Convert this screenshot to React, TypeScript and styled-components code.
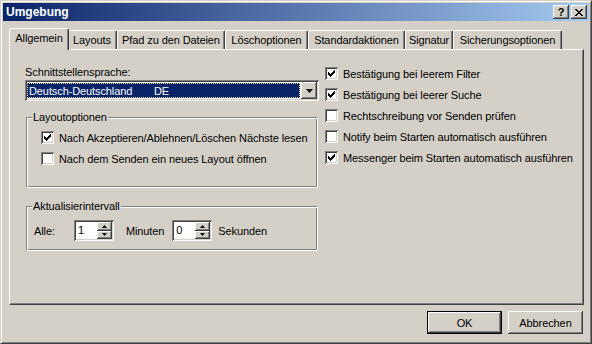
import React from 'react';
import styled, { createGlobalStyle, css } from 'styled-components';

const face = '#d4d0c8';
const shadow = '#808080';
const dark = '#404040';
const navy = '#0a246a';

const GlobalStyle = createGlobalStyle`
  html, body { margin: 0; padding: 0; background: ${face}; }
  body { font: 11px "Liberation Sans", Arial, sans-serif; color: #000; letter-spacing: -0.1px; }
  * { box-sizing: border-box; }
`;

const raised = css`
  background: ${face};
  box-shadow: inset -1px -1px ${dark}, inset 1px 1px #fff, inset -2px -2px ${shadow};
`;

const sunken = css`
  box-shadow: inset 1px 1px ${shadow}, inset -1px -1px #fff, inset 2px 2px ${dark}, inset -2px -2px ${face};
`;

const Window = styled.div`
  width: 592px;
  height: 344px;
  background: ${face};
  border: 1px solid;
  border-color: ${face} ${dark} ${dark} ${face};
  box-shadow: inset 1px 1px #fff, inset -1px -1px ${shadow};
  padding: 2px;
  display: flex;
  flex-direction: column;
`;

const TitleBar = styled.div`
  height: 18px;
  flex: none;
  display: flex;
  align-items: center;
  padding: 0 2px 0 3px;
  background: linear-gradient(to right, ${navy}, #a6caf0);
`;

const Title = styled.span`
  flex: 1;
  color: #fff;
  font-weight: bold;
  font-size: 12px;
  letter-spacing: 0;
`;

const CaptionButton = styled.div`
  ${raised};
  width: 16px;
  height: 14px;
  margin-left: 2px;
  display: flex;
  align-items: center;
  justify-content: center;
  font-weight: bold;
  font-size: 11px;
  line-height: 1;
`;

const Body = styled.div`
  flex: 1;
  display: flex;
  flex-direction: column;
  padding: 7px 5px 0 6px;
`;

const TabStrip = styled.div`
  height: 21px;
  display: flex;
  align-items: flex-end;
  padding-left: 2px;
`;

const Tab = styled.div<{ $w: number; $active?: boolean }>`
  position: relative;
  z-index: ${p => (p.$active ? 2 : 1)};
  width: ${p => p.$w + (p.$active ? 4 : 0)}px;
  height: ${p => (p.$active ? 22 : 19)}px;
  margin: 0 ${p => (p.$active ? -2 : 0)}px ${p => (p.$active ? -1 : 0)}px;
  padding-bottom: ${p => (p.$active ? 3 : 1)}px;
  background: ${face};
  border-top: 1px solid #fff;
  border-left: 1px solid #fff;
  border-right: 1px solid ${dark};
  border-radius: 2px 2px 0 0;
  box-shadow: inset -1px 0 ${shadow};
  display: flex;
  align-items: center;
  justify-content: center;
  white-space: nowrap;
`;

const Panel = styled.div`
  height: 256px;
  border-top: 1px solid #fff;
  border-left: 1px solid #fff;
  border-right: 1px solid ${dark};
  border-bottom: 1px solid ${dark};
  box-shadow: inset -1px -1px ${shadow};
  padding: 16px 0 0 15px;
  display: flex;
  gap: 6px;
`;

const LeftColumn = styled.div`
  width: 294px;
  display: flex;
  flex-direction: column;
`;

const RightColumn = styled.div`
  margin-top: -3px;
  display: flex;
  flex-direction: column;
`;

const FieldLabel = styled.div`
  height: 13px;
  line-height: 13px;
  margin-bottom: 1px;
`;

const Combo = styled.div`
  ${sunken};
  width: 294px;
  height: 21px;
  background: #fff;
  padding: 2px;
  display: flex;
`;

const ComboField = styled.div`
  flex: 1;
  margin: 1px 1px 1px 0;
  background: ${navy};
  border: 1px dotted #e8d890;
  color: #fff;
  display: flex;
  align-items: center;
  padding-left: 1px;
  white-space: nowrap;
`;

const ComboName = styled.span`
  width: 125px;
`;

const DropButton = styled.div`
  ${raised};
  width: 16px;
  height: 17px;
  display: flex;
  align-items: center;
  justify-content: center;
`;

const Group = styled.fieldset<{ $pad: number; $top: number; $bottom: number; $gap: number }>`
  margin: ${p => p.$gap}px 1px 0;
  min-width: 0;
  width: 292px;
  border-top: 1px solid ${shadow};
  border-left: 1px solid ${shadow};
  border-bottom: 1px solid #fff;
  border-right: 1px solid #fff;
  box-shadow: inset 1px 1px #fff, inset -1px -1px ${shadow};
  padding: ${p => p.$top}px 0 ${p => p.$bottom}px ${p => p.$pad}px;
`;

const Legend = styled.legend<{ $shift: number }>`
  padding: 0 1px;
  margin-left: ${p => p.$shift}px;
  line-height: 13px;
  background: ${face};
`;

const CheckRow = styled.div`
  height: 21px;
  display: flex;
  align-items: center;
  gap: 5px;
  white-space: nowrap;
`;

const Box = styled.div`
  ${sunken};
  width: 13px;
  height: 13px;
  flex: none;
  background: #fff;
  display: flex;
  align-items: center;
  justify-content: center;
`;

const SpinRow = styled.div`
  height: 21px;
  display: flex;
  align-items: center;
`;

const SpinText = styled.span<{ $left: number }>`
  margin-left: ${p => p.$left}px;
`;

const Spin = styled.div<{ $left: number }>`
  ${sunken};
  margin-left: ${p => p.$left}px;
  width: 40px;
  height: 21px;
  background: #fff;
  padding: 2px;
  display: flex;
`;

const SpinValue = styled.span`
  flex: 1;
  padding-left: 2px;
  line-height: 17px;
`;

const SpinButtons = styled.div`
  width: 15px;
  display: flex;
  flex-direction: column;
`;

const SpinButton = styled.div`
  ${raised};
  flex: 1;
  display: flex;
  align-items: center;
  justify-content: center;
`;

const ButtonRow = styled.div`
  display: flex;
  justify-content: flex-end;
  gap: 6px;
  margin-top: 6px;
  padding-right: 1px;
`;

const Button = styled.div<{ $default?: boolean }>`
  ${raised};
  width: 75px;
  height: 23px;
  display: flex;
  align-items: center;
  justify-content: center;
  ${p =>
    p.$default &&
    css`
      border: 1px solid #000;
    `}
`;

const Check = () => (
  <svg width="7" height="7" viewBox="0 0 7 7" shapeRendering="crispEdges">
    <path d="M0 2h1v1h1v1h1V3h1V2h1V1h1V0h1v3h-1v1h-1v1h-1v1h-1v1H2V6H1V5H0z" fill="#000" />
  </svg>
);

const Arrow = ({ up, size = 7 }: { up?: boolean; size?: number }) => {
  const h = Math.ceil(size / 2);
  const pts = up ? `0,${h} ${size},${h} ${size / 2},0` : `0,0 ${size},0 ${size / 2},${h}`;
  return (
    <svg width={size} height={h} viewBox={`0 0 ${size} ${h}`}>
      <polygon points={pts} fill="#000" />
    </svg>
  );
};

const CloseGlyph = () => (
  <svg width="8" height="7" viewBox="0 0 8 7" shapeRendering="crispEdges">
    <path
      d="M0 0h2v1h1v1h2V1h1V0h2v1H7v1H6v1H5v1h1v1h1v1h1v1H6V6H5V5H3v1H2v1H0V6h1V5h1V4h1V3H2V2H1V1H0z"
      fill="#000"
    />
  </svg>
);

const CheckItem = ({ label, checked }: { label: string; checked?: boolean }) => (
  <CheckRow>
    <Box>{checked && <Check />}</Box>
    <span>{label}</span>
  </CheckRow>
);

const SpinBox = ({ value, left }: { value: string; left: number }) => (
  <Spin $left={left}>
    <SpinValue>{value}</SpinValue>
    <SpinButtons>
      <SpinButton>
        <Arrow up size={5} />
      </SpinButton>
      <SpinButton>
        <Arrow size={5} />
      </SpinButton>
    </SpinButtons>
  </Spin>
);

const tabs = [
  { label: 'Allgemein', w: 56 },
  { label: 'Layouts', w: 50 },
  { label: 'Pfad zu den Dateien', w: 108 },
  { label: 'Löschoptionen', w: 83 },
  { label: 'Standardaktionen', w: 97 },
  { label: 'Signatur', w: 48 },
  { label: 'Sicherungsoptionen', w: 109 },
];

const options = [
  { label: 'Bestätigung bei leerem Filter', checked: true },
  { label: 'Bestätigung bei leerer Suche', checked: true },
  { label: 'Rechtschreibung vor Senden prüfen', checked: false },
  { label: 'Notify beim Starten automatisch ausführen', checked: false },
  { label: 'Messenger beim Starten automatisch ausführen', checked: true },
];

export default function App() {
  return (
    <>
      <GlobalStyle />
      <Window>
        <TitleBar>
          <Title>Umgebung</Title>
          <CaptionButton>?</CaptionButton>
          <CaptionButton>
            <CloseGlyph />
          </CaptionButton>
        </TitleBar>
        <Body>
          <TabStrip>
            {tabs.map((t, i) => (
              <Tab key={t.label} $w={t.w} $active={i === 0}>
                {t.label}
              </Tab>
            ))}
          </TabStrip>
          <Panel>
            <LeftColumn>
              <FieldLabel>Schnittstellensprache:</FieldLabel>
              <Combo>
                <ComboField>
                  <ComboName>Deutsch-Deutschland</ComboName>
                  <span>DE</span>
                </ComboField>
                <DropButton>
                  <Arrow />
                </DropButton>
              </Combo>
              <Group $pad={14} $top={3} $bottom={18} $gap={10}>
                <Legend $shift={-9}>Layoutoptionen</Legend>
                <CheckItem label="Nach Akzeptieren/Ablehnen/Löschen Nächste lesen" checked />
                <CheckItem label="Nach dem Senden ein neues Layout öffnen" />
              </Group>
              <Group $pad={7} $top={7} $bottom={9} $gap={12}>
                <Legend $shift={-2}>Aktualisierintervall</Legend>
                <SpinRow>
                  <span>Alle:</span>
                  <SpinBox value="1" left={19} />
                  <SpinText $left={12}>Minuten</SpinText>
                  <SpinBox value="0" left={8} />
                  <SpinText $left={6}>Sekunden</SpinText>
                </SpinRow>
              </Group>
            </LeftColumn>
            <RightColumn>
              {options.map(o => (
                <CheckItem key={o.label} label={o.label} checked={o.checked} />
              ))}
            </RightColumn>
          </Panel>
          <ButtonRow>
            <Button $default>OK</Button>
            <Button>Abbrechen</Button>
          </ButtonRow>
        </Body>
      </Window>
    </>
  );
}
